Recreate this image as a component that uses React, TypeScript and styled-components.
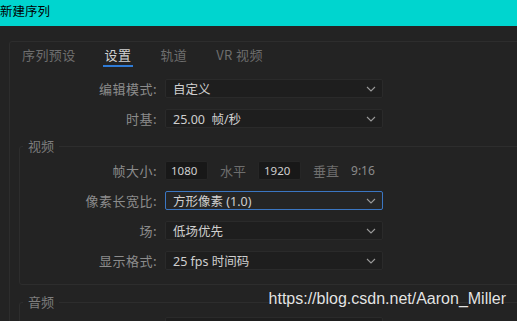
import styled, { createGlobalStyle } from "styled-components";

const GlobalStyle = createGlobalStyle`
	body {
		margin: 0;
		background: #232323;
		font-family: "Noto Sans", "Noto Sans CJK SC", sans-serif;
	}
`;

const tabs = ["序列预设", "设置", "轨道", "VR 视频"];

const Chevron = () => (
	<svg width="10" height="6" viewBox="0 0 10 6">
		<path d="M1 1 L5 5 L9 1" fill="none" stroke="#9a9a9a" strokeWidth="1.1" />
	</svg>
);

interface SelectProps {
	value: string;
	focused?: boolean;
}

const Select = ({ value, focused }: SelectProps) => (
	<SelectBox $focused={focused}>
		<span>{value}</span>
		<Chevron />
	</SelectBox>
);

const App = () => {
	return (
		<Window>
			<GlobalStyle />
			<TitleBar>新建序列</TitleBar>
			<Body>
				<Panel>
					<TabBar>
						{tabs.map((t) => (
							<Tab key={t} $active={t === "设置"}>
								{t}
							</Tab>
						))}
					</TabBar>
					<Rows>
						<Row>
							<Label $width={147}>编辑模式:</Label>
							<Select value="自定义" />
						</Row>
						<Row>
							<Label $width={147}>时基:</Label>
							<Select value="25.00  帧/秒" />
						</Row>
					</Rows>
					<Group>
						<Legend>视频</Legend>
						<GroupRows>
							<Row>
								<Label $width={137}>帧大小:</Label>
								<NumInput>1080</NumInput>
								<Unit>水平</Unit>
								<NumInput>1920</NumInput>
								<Unit>垂直</Unit>
								<Ratio>9:16</Ratio>
							</Row>
							<Row>
								<Label $width={137}>像素长宽比:</Label>
								<Select value="方形像素 (1.0)" focused />
							</Row>
							<Row>
								<Label $width={137}>场:</Label>
								<Select value="低场优先" />
							</Row>
							<Row>
								<Label $width={137}>显示格式:</Label>
								<Select value="25 fps 时间码" />
							</Row>
						</GroupRows>
					</Group>
					<AudioGroup>
						<Legend>音频</Legend>
						<GroupRows>
							<Row>
								<Label $width={137} />
								<Select value="" />
							</Row>
						</GroupRows>
					</AudioGroup>
				</Panel>
			</Body>
			<Watermark>https://blog.csdn.net/Aaron_Miller</Watermark>
		</Window>
	);
};

export default App;

const Window = styled.div`
	position: relative;
	width: 517px;
	height: 321px;
	overflow: hidden;
	background: #232323;
`;

const TitleBar = styled.div`
	height: 26px;
	box-sizing: border-box;
	padding: 2px 0 0 0;
	background: #00d5cf;
	color: #000;
	font-family: "Noto Sans CJK SC", sans-serif;
	font-size: 12.5px;
	line-height: 17px;
`;

const Body = styled.div`
	padding: 15px 0 0 9px;
`;

const Panel = styled.div`
	width: 560px;
	border: 1px solid #2d2d2d;
	border-radius: 3px;
	padding-top: 4px;
`;

const TabBar = styled.div`
	display: flex;
	gap: 25px;
	padding-left: 10px;
`;

const Tab = styled.div<{ $active?: boolean }>`
	padding: 0 2px 1px;
	font-family: "Noto Sans CJK SC", sans-serif;
	font-size: 13px;
	line-height: 18px;
	letter-spacing: 0.4px;
	color: ${(p) => (p.$active ? "#d2d2d2" : "#6e6e6e")};
	border-bottom: 2px solid ${(p) => (p.$active ? "#2f7bd6" : "transparent")};
`;

const Rows = styled.div`
	display: flex;
	flex-direction: column;
	gap: 11px;
	padding-top: 12px;
`;

const Row = styled.div`
	display: flex;
	align-items: center;
	height: 19px;
`;

const Label = styled.div<{ $width: number }>`
	width: ${(p) => p.$width}px;
	margin-right: 8px;
	text-align: right;
	font-family: "Noto Sans CJK SC", sans-serif;
	font-size: 13px;
	letter-spacing: 0.5px;
	color: #8c8c8c;
	white-space: nowrap;
`;

const SelectBox = styled.div<{ $focused?: boolean }>`
	display: flex;
	align-items: center;
	justify-content: space-between;
	box-sizing: border-box;
	width: 218px;
	height: 19px;
	padding: 0 6px 0 7px;
	background: ${(p) => (p.$focused ? "#252525" : "#1e1e1e")};
	border: 1px solid ${(p) => (p.$focused ? "#3b76c2" : "#2a2a2a")};
	border-radius: 2px;
	font-family: "Noto Sans", "Noto Sans CJK SC", sans-serif;
	font-size: 12.5px;
	color: #cfcfcf;
	white-space: pre;
`;

const Group = styled.fieldset`
	margin: 10px 0 0 9px;
	padding: 7px 0 14px;
	border: 1px solid #2d2d2d;
	border-radius: 3px;
	min-width: 0;
`;

const AudioGroup = styled(Group)`
	margin-top: 9px;
`;

const Legend = styled.legend`
	margin-left: 3px;
	padding: 0 5px;
	font-family: "Noto Sans CJK SC", sans-serif;
	font-size: 13px;
	line-height: 16px;
	color: #7e7e7e;
`;

const GroupRows = styled.div`
	display: flex;
	flex-direction: column;
	gap: 11px;
`;

const NumInput = styled.div`
	box-sizing: border-box;
	width: 43px;
	height: 19px;
	padding-left: 5px;
	background: #181818;
	border: 1px solid #262626;
	border-radius: 2px;
	font-family: "Noto Sans", sans-serif;
	font-size: 11.5px;
	line-height: 17px;
	color: #cfcfcf;
`;

const Unit = styled.div`
	margin: 0 12px;
	font-family: "Noto Sans CJK SC", sans-serif;
	font-size: 13px;
	color: #6e6e6e;
`;

const Ratio = styled.div`
	font-family: "Noto Sans", sans-serif;
	font-size: 12px;
	color: #8a8a8a;
`;

const Watermark = styled.div`
	position: absolute;
	top: 290px;
	right: 11px;
	font-family: "Liberation Sans", Arial, sans-serif;
	font-size: 16px;
	color: #e4e4e4;
	text-shadow: 0 0 1px rgba(0, 0, 0, 0.6);
`;
